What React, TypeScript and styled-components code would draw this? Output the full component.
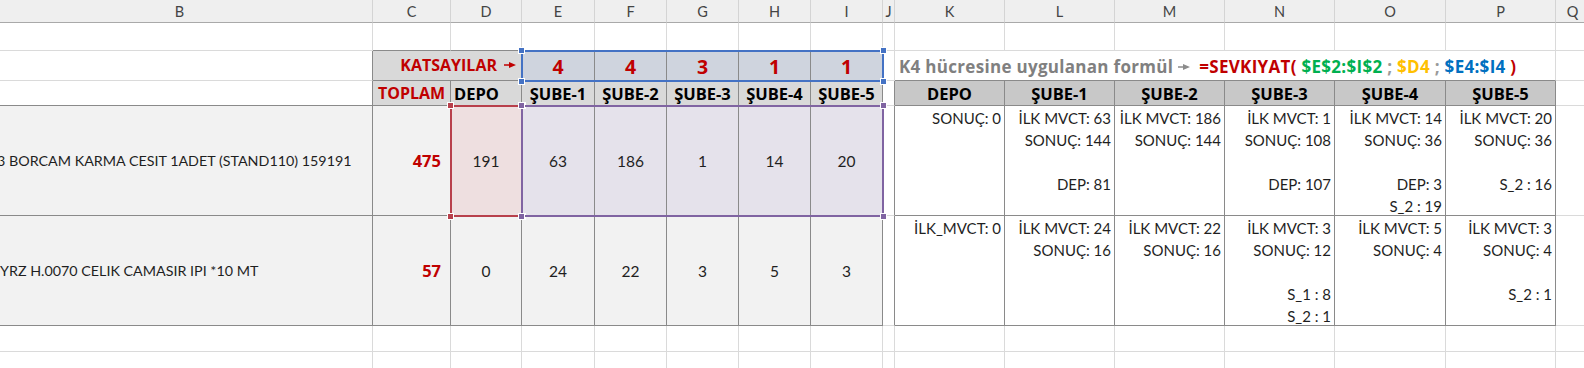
import React from "react";
import styled, { createGlobalStyle } from "styled-components";

const GRID = "#dadada";
const LINE = "#8a8a8a";
const RED = "#c00000";
const HEAD_BG = "#d9d9d9";
const BOLD_FONT = `"Open Sans", "Noto Sans", sans-serif`;

const GlobalStyle = createGlobalStyle`
  html, body { margin: 0; padding: 0; background: #ffffff; }
  body { overflow: hidden; font-family: Lato, "Noto Sans", "DejaVu Sans", sans-serif; }
`;

const Viewport = styled.div`
  width: 1584px;
  height: 368px;
  overflow: hidden;
  background: #ffffff;
`;

const Sheet = styled.div`
  display: grid;
  grid-template-columns: 386px 78px 71px 73px repeat(4, 72px) 12px repeat(4, 110px) 111px 110px 34px;
  grid-template-rows: 23px 28px 30px 25px 110px 110px 26px 30px;
  margin-left: -13px;
  width: max-content;
  font-family: Lato, "Noto Sans", sans-serif;
  font-size: 15px;
  color: #1f1f1f;
`;

type Place = { $c: number; $r: number; $span?: number };
const place = (p: Place) =>
  `grid-column: ${p.$c} / span ${p.$span ?? 1}; grid-row: ${p.$r};`;

const ColumnHeader = styled.div<Place>`
  ${place}
  box-sizing: border-box;
  display: flex;
  align-items: center;
  justify-content: center;
  background: #efefef;
  border-right: 1px solid #d4d4d4;
  border-bottom: 1px solid #a9a9a9;
  color: #444444;
  font-size: 14.5px;
  overflow: hidden;
`;

type CellP = Place & {
  $bg?: string;
  $right?: string;
  $bottom?: string;
  $justify?: string;
  $alignY?: string;
  $padL?: number;
  $padR?: number;
  $padT?: number;
  $padB?: number;
};

const Cell = styled.div<CellP>`
  ${place}
  box-sizing: border-box;
  display: flex;
  justify-content: ${(p) => p.$justify ?? "flex-start"};
  align-items: ${(p) => p.$alignY ?? "center"};
  background: ${(p) => p.$bg ?? "#ffffff"};
  border-right: 1px solid ${(p) => p.$right ?? GRID};
  border-bottom: 1px solid ${(p) => p.$bottom ?? GRID};
  padding: ${(p) => p.$padT ?? 0}px ${(p) => p.$padR ?? 3}px ${(p) => p.$padB ?? 0}px
    ${(p) => p.$padL ?? 3}px;
  overflow: hidden;
  white-space: nowrap;
  min-width: 0;
`;

const Caption = styled.span<{ $color?: string; $size?: number }>`
  font-family: ${BOLD_FONT};
  font-weight: 700;
  font-size: ${(p) => p.$size ?? 16.5}px;
  color: ${(p) => p.$color ?? "#000000"};
  display: inline-flex;
  align-items: center;
`;

const CoefValue = styled.span`
  font-family: ${BOLD_FONT};
  font-weight: 700;
  font-size: 19.5px;
  color: ${RED};
`;

const Total = styled.span`
  font-family: ${BOLD_FONT};
  font-weight: 700;
  font-size: 16.5px;
  color: ${RED};
`;

const Amount = styled.span`
  font-size: 15.5px;
  color: #1f1f1f;
`;

const ProductName = styled.span`
  font-size: 14.3px;
  color: #1f1f1f;
`;

const ResultStack = styled.div`
  display: flex;
  flex-direction: column;
  align-items: flex-end;
  line-height: 22px;
  font-size: 15px;
  color: #1f1f1f;
`;

const FormulaNote = styled.div`
  display: flex;
  align-items: center;
  font-family: ${BOLD_FONT};
  font-weight: 700;
  font-size: 17px;
  letter-spacing: 0.3px;
  white-space: pre;
`;

const Token = styled.span<{ $color: string; $gap?: number }>`
  color: ${(p) => p.$color};
  margin-left: ${(p) => p.$gap ?? 0}px;
`;

const PointerSvg = styled.svg<{ $gap: number }>`
  margin-left: ${(p) => p.$gap}px;
  flex: none;
`;

const Pointer = ({ color, gap }: { color: string; gap: number }) => (
  <PointerSvg $gap={gap} width="12" height="6" viewBox="0 0 12 6">
    <path d="M0 2.2H5V0L12 3L5 6V3.8H0Z" fill={color} />
  </PointerSvg>
);

const Selection = styled.div<Place & { $color: string }>`
  ${place}
  position: relative;
  z-index: 3;
  margin: -1px;
  border: 2px solid ${(p) => p.$color};
  pointer-events: none;
`;

const Handle = styled.span<{ $color: string; $x: "left" | "right"; $y: "top" | "bottom" }>`
  position: absolute;
  ${(p) => p.$x}: -5px;
  ${(p) => p.$y}: -5px;
  width: 7px;
  height: 7px;
  box-sizing: border-box;
  background: ${(p) => p.$color};
  border: 1px solid #ffffff;
`;

const SelectionBox = ({ c, r, span, color }: { c: number; r: number; span?: number; color: string }) => (
  <Selection $c={c} $r={r} $span={span} $color={color}>
    <Handle $color={color} $x="left" $y="top" />
    <Handle $color={color} $x="right" $y="top" />
    <Handle $color={color} $x="left" $y="bottom" />
    <Handle $color={color} $x="right" $y="bottom" />
  </Selection>
);

const LETTERS = ["B", "C", "D", "E", "F", "G", "H", "I", "J", "K", "L", "M", "N", "O", "P", "Q"];
const COEFS = [4, 4, 3, 1, 1];
const BRANCHES = ["ŞUBE-1", "ŞUBE-2", "ŞUBE-3", "ŞUBE-4", "ŞUBE-5"];

type Product = {
  name: string;
  indent: number;
  total: number;
  depo: number;
  qty: number[];
  tint: boolean;
  results: string[][];
};

const PRODUCTS: Product[] = [
  {
    name: "3 BORCAM KARMA CESIT 1ADET (STAND110) 159191",
    indent: 10,
    total: 475,
    depo: 191,
    qty: [63, 186, 1, 14, 20],
    tint: true,
    results: [
      ["SONUÇ: 0"],
      ["İLK MVCT: 63", "SONUÇ: 144", "", "DEP: 81"],
      ["İLK MVCT: 186", "SONUÇ: 144"],
      ["İLK MVCT: 1", "SONUÇ: 108", "", "DEP: 107"],
      ["İLK MVCT: 14", "SONUÇ: 36", "", "DEP: 3", "S_2 : 19"],
      ["İLK MVCT: 20", "SONUÇ: 36", "", "S_2 : 16"],
    ],
  },
  {
    name: "YRZ H.0070 CELIK CAMASIR IPI *10 MT",
    indent: 13,
    total: 57,
    depo: 0,
    qty: [24, 22, 3, 5, 3],
    tint: false,
    results: [
      ["İLK_MVCT: 0"],
      ["İLK MVCT: 24", "SONUÇ: 16"],
      ["İLK MVCT: 22", "SONUÇ: 16"],
      ["İLK MVCT: 3", "SONUÇ: 12", "", "S_1 : 8", "S_2 : 1"],
      ["İLK MVCT: 5", "SONUÇ: 4"],
      ["İLK MVCT: 3", "SONUÇ: 4", "", "S_2 : 1"],
    ],
  },
];

const blankRow = (r: number, bottomLine: number[] = []) =>
  LETTERS.map((_, i) => (
    <Cell key={`b${r}-${i}`} $c={i + 1} $r={r} $bottom={bottomLine.includes(i + 1) ? LINE : GRID} />
  ));

export default function App() {
  return (
    <Viewport>
      <GlobalStyle />
      <Sheet>
        {LETTERS.map((l, i) => (
          <ColumnHeader key={l} $c={i + 1} $r={1}>
            {l}
          </ColumnHeader>
        ))}

        {blankRow(2, [2, 3, 4, 5, 6, 7, 8])}

        {/* Row 2: coefficients + formula note */}
        <Cell $c={1} $r={3} $right={LINE} />
        <Cell $c={2} $r={3} $span={2} $bg={HEAD_BG} $right={LINE} $bottom={LINE} $justify="flex-end" $padR={5} $padB={2}>
          <Caption $color={RED} $size={16}>
            KATSAYILAR
            <Pointer color={RED} gap={7} />
          </Caption>
        </Cell>
        {COEFS.map((v, i) => (
          <Cell key={`k${i}`} $c={4 + i} $r={3} $bg="#cfd4de" $right={LINE} $bottom={LINE} $justify="center" $alignY="flex-end" $padB={0}>
            <CoefValue>{v}</CoefValue>
          </Cell>
        ))}
        <Cell $c={9} $r={3} />
        <Cell $c={10} $r={3} $span={6} $bottom={LINE} $padL={4} $padT={2}>
          <FormulaNote>
            <Token $color="#808080">K4 hücresine uygulanan formül</Token>
            <Pointer color="#8c8c8c" gap={5} />
            <Token $color={RED} $gap={9}>=SEVKIYAT(</Token>
            <Token $color="#00b050"> $E$2:$I$2</Token>
            <Token $color="#9a9a9a"> ; </Token>
            <Token $color="#ffc000">$D4</Token>
            <Token $color="#9a9a9a"> ; </Token>
            <Token $color="#0070c0">$E4:$I4</Token>
            <Token $color={RED}> )</Token>
          </FormulaNote>
        </Cell>
        <Cell $c={16} $r={3} />

        {/* Row 3: headings */}
        <Cell $c={1} $r={4} $right={LINE} $bottom={LINE} />
        <Cell $c={2} $r={4} $bg={HEAD_BG} $right={LINE} $bottom={LINE} $justify="center" $padL={0} $padR={0}>
          <Caption $color={RED} $size={16}>TOPLAM</Caption>
        </Cell>
        <Cell $c={3} $r={4} $bg={HEAD_BG} $right={LINE} $bottom={LINE} $padL={3}>
          <Caption>DEPO</Caption>
        </Cell>
        {BRANCHES.map((b, i) => (
          <Cell key={`h${i}`} $c={4 + i} $r={4} $bg={HEAD_BG} $right={LINE} $bottom={LINE} $justify="center" $padL={0} $padR={0}>
            <Caption>{b}</Caption>
          </Cell>
        ))}
        <Cell $c={9} $r={4} $right={LINE} />
        {["DEPO", ...BRANCHES].map((b, i) => (
          <Cell key={`rh${i}`} $c={10 + i} $r={4} $bg="#c8c8c8" $right={LINE} $bottom={LINE} $justify="center">
            <Caption>{b}</Caption>
          </Cell>
        ))}
        <Cell $c={16} $r={4} />

        {/* Data rows */}
        {PRODUCTS.map((p, pi) => {
          const r = 5 + pi;
          return (
            <React.Fragment key={p.name}>
              <Cell $c={1} $r={r} $bg="#f2f2f2" $right={LINE} $bottom={LINE} $padL={p.indent}>
                <ProductName>{p.name}</ProductName>
              </Cell>
              <Cell $c={2} $r={r} $bg="#f2f2f2" $right={LINE} $bottom={LINE} $justify="flex-end" $padR={9}>
                <Total>{p.total}</Total>
              </Cell>
              <Cell $c={3} $r={r} $bg={p.tint ? "#eedfe0" : "#f2f2f2"} $right={LINE} $bottom={LINE} $justify="center">
                <Amount>{p.depo}</Amount>
              </Cell>
              {p.qty.map((q, i) => (
                <Cell key={`q${i}`} $c={4 + i} $r={r} $bg={p.tint ? "#e5e2eb" : "#f2f2f2"} $right={LINE} $bottom={LINE} $justify="center">
                  <Amount>{q}</Amount>
                </Cell>
              ))}
              <Cell $c={9} $r={r} $right={LINE} />
              {p.results.map((lines, i) => (
                <Cell key={`res${i}`} $c={10 + i} $r={r} $right={LINE} $bottom={LINE} $justify="flex-end" $alignY="flex-start" $padT={1} $padR={3}>
                  <ResultStack>
                    {lines.map((l, li) => (
                      <span key={li}>{l || "\u00a0"}</span>
                    ))}
                  </ResultStack>
                </Cell>
              ))}
              <Cell $c={16} $r={r} />
            </React.Fragment>
          );
        })}

        {blankRow(7)}
        {blankRow(8)}

        <SelectionBox c={4} r={3} span={5} color="#4472c4" />
        <SelectionBox c={3} r={5} color="#b8404c" />
        <SelectionBox c={4} r={5} span={5} color="#8064a2" />
      </Sheet>
    </Viewport>
  );
}
